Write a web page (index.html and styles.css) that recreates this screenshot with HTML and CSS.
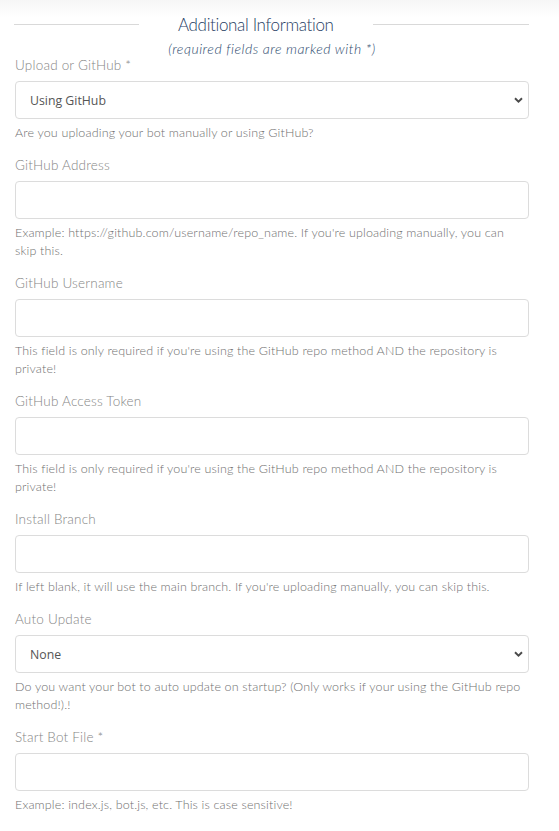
FILE: index.html
```html
<!DOCTYPE html>
<html>
<head>
<meta charset="utf-8">
<link rel="stylesheet" href="styles.css">
</head>
<body>
<div class="page">
  <div class="section-head">
    <span class="rule rule-left"></span>
    <h2 class="title">Additional Information</h2>
    <span class="rule rule-right"></span>
  </div>
  <p class="subtitle">(required fields are marked with *)</p>

  <div class="field first">
    <label class="label">Upload or GitHub *</label>
    <div class="select-wrap">
      <select class="control select"><option>Using GitHub</option></select>
      <svg class="chev" width="9" height="6" viewBox="0 0 9 6"><path d="M1 1.2 L4.5 4.6 L8 1.2" fill="none" stroke="#4a4a4a" stroke-width="1.9"/></svg>
    </div>
    <p class="help">Are you uploading your bot manually or using GitHub?</p>
  </div>

  <div class="field">
    <label class="label">GitHub Address</label>
    <input class="control" type="text">
    <p class="help">Example: https://github.com/username/repo_name. If you're uploading manually, you can skip this.</p>
  </div>

  <div class="field">
    <label class="label">GitHub Username</label>
    <input class="control" type="text">
    <p class="help">This field is only required if you're using the GitHub repo method AND the repository is private!</p>
  </div>

  <div class="field">
    <label class="label">GitHub Access Token</label>
    <input class="control" type="text">
    <p class="help">This field is only required if you're using the GitHub repo method AND the repository is private!</p>
  </div>

  <div class="field">
    <label class="label">Install Branch</label>
    <input class="control" type="text">
    <p class="help">If left blank, it will use the main branch. If you're uploading manually, you can skip this.</p>
  </div>

  <div class="field">
    <label class="label">Auto Update</label>
    <div class="select-wrap">
      <select class="control select"><option>None</option></select>
      <svg class="chev" width="9" height="6" viewBox="0 0 9 6"><path d="M1 1.2 L4.5 4.6 L8 1.2" fill="none" stroke="#4a4a4a" stroke-width="1.9"/></svg>
    </div>
    <p class="help">Do you want your bot to auto update on startup? (Only works if your using the GitHub repo method!).!</p>
  </div>

  <div class="field">
    <label class="label">Start Bot File *</label>
    <input class="control" type="text">
    <p class="help">Example: index.js, bot.js, etc. This is case sensitive!</p>
  </div>
</div>
</body>
</html>
```

FILE: styles.css
```css
html, body {
  margin: 0;
  padding: 0;
  background: #fff;
}
body {
  font-family: "Lato", "Noto Sans", sans-serif;
  font-weight: 300;
  background: linear-gradient(to bottom, #f6f6f6 0px, #fdfdfd 14px, #ffffff 18px);
}
.page {
  width: 514px;
  padding: 15px 30px 20px 15px;
}
.section-head {
  display: flex;
  align-items: flex-start;
}
.rule {
  height: 1px;
  margin-top: 9px;
  background: #d9d9d9;
}
.rule-left {
  width: 125px;
  margin-left: -1px;
}
.rule-right {
  flex: 1;
}
.title {
  margin: 0;
  padding: 0 39px;
  font-size: 17px;
  font-weight: 300;
  line-height: 20px;
  color: #1f3d63;
  letter-spacing: -0.35px;
}
.subtitle {
  margin: 5px 0 0;
  text-align: center;
  font-style: italic;
  font-weight: 300;
  font-size: 14px;
  line-height: 18px;
  color: #2d4a6e;
  letter-spacing: 0.5px;
}
.field {
  margin-top: 14px;
  display: flex;
  flex-direction: column;
}
.field.first {
  margin-top: -2px;
}
.label {
  font-size: 13.5px;
  line-height: 18px;
  color: #858585;
  margin-bottom: 7px;
  letter-spacing: 0.2px;
}
.control {
  box-sizing: border-box;
  width: 514px;
  height: 38px;
  border: 1px solid #dcdcdc;
  border-radius: 4px;
  background: #fff;
  margin: 0;
  padding: 0 14px;
  font-family: "Open Sans", sans-serif;
  font-weight: 400;
  font-size: 12.3px;
  color: #555;
  outline: none;
}
.select-wrap {
  position: relative;
}
.select {
  appearance: none;
  -webkit-appearance: none;
  display: block;
}
.chev {
  position: absolute;
  right: 6px;
  top: 16px;
}
.help {
  margin: 5px 0 0;
  font-size: 12.5px;
  line-height: 18px;
  color: #707070;
  letter-spacing: 0.15px;
}
```
